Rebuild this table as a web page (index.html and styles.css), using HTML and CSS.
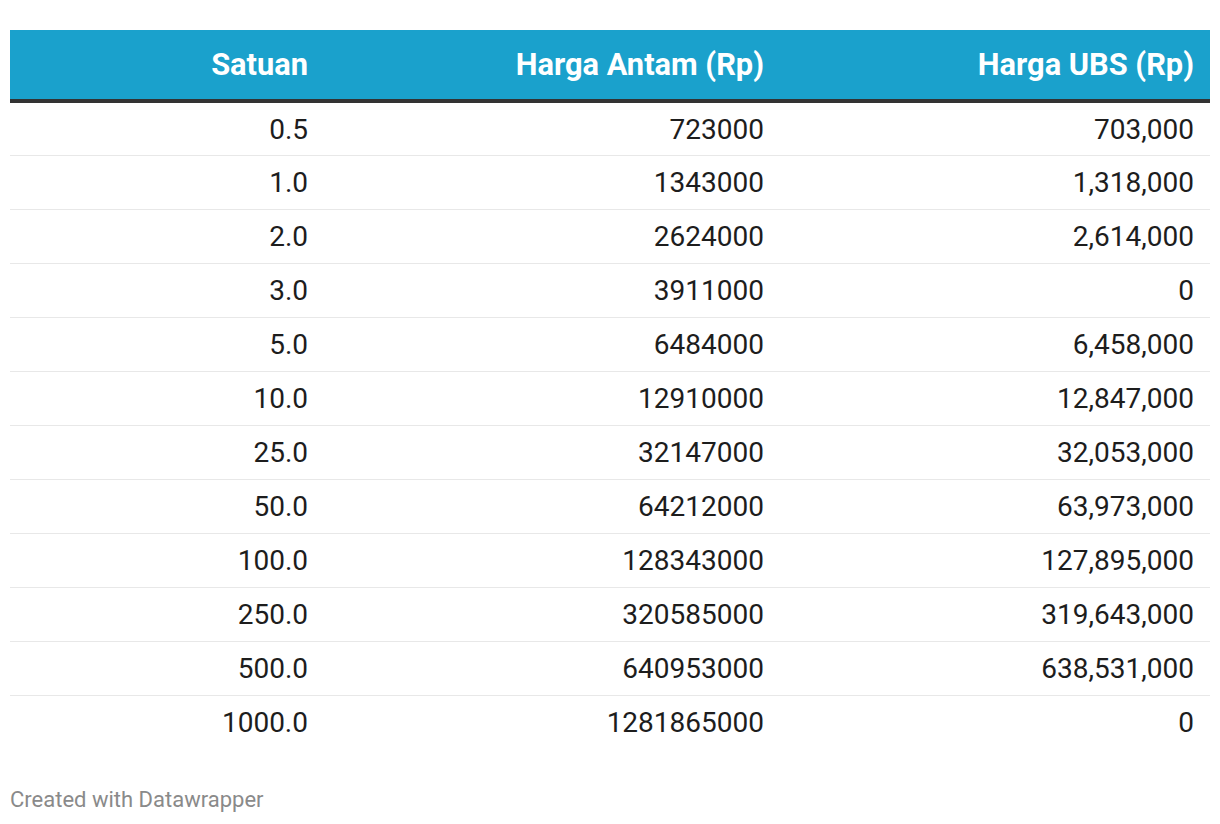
FILE: index.html
```html
<!DOCTYPE html>
<html>
<head>
<meta charset="utf-8">
<link rel="stylesheet" href="styles.css">
</head>
<body>
<div class="chart">
  <table class="tbl">
    <colgroup>
      <col class="c1"><col class="c2"><col class="c3">
    </colgroup>
    <thead>
      <tr><th>Satuan</th><th>Harga Antam (Rp)</th><th>Harga UBS (Rp)</th></tr>
    </thead>
    <tbody>
      <tr><td>0.5</td><td>723000</td><td>703,000</td></tr>
      <tr><td>1.0</td><td>1343000</td><td>1,318,000</td></tr>
      <tr><td>2.0</td><td>2624000</td><td>2,614,000</td></tr>
      <tr><td>3.0</td><td>3911000</td><td>0</td></tr>
      <tr><td>5.0</td><td>6484000</td><td>6,458,000</td></tr>
      <tr><td>10.0</td><td>12910000</td><td>12,847,000</td></tr>
      <tr><td>25.0</td><td>32147000</td><td>32,053,000</td></tr>
      <tr><td>50.0</td><td>64212000</td><td>63,973,000</td></tr>
      <tr><td>100.0</td><td>128343000</td><td>127,895,000</td></tr>
      <tr><td>250.0</td><td>320585000</td><td>319,643,000</td></tr>
      <tr><td>500.0</td><td>640953000</td><td>638,531,000</td></tr>
      <tr><td>1000.0</td><td>1281865000</td><td>0</td></tr>
    </tbody>
  </table>
  <div class="footer">Created with Datawrapper</div>
</div>
</body>
</html>
```
FILE: styles.css
```css
html, body {
  margin: 0;
  padding: 0;
  background: #ffffff;
}
body {
  font-family: Roboto, "Liberation Sans", sans-serif;
}
.chart {
  padding: 30px 10px 0 10px;
}
.tbl {
  width: 1200px;
  border-collapse: collapse;
  table-layout: fixed;
  font-size: 28px;
  color: #1d1d1d;
}
.c1 { width: 314px; }
.c2 { width: 456px; }
.c3 { width: 430px; }
.tbl th {
  background: #1aa1cc;
  color: #ffffff;
  font-weight: 700;
  font-size: 30.8px;
  text-align: right;
  height: 71px;
  padding: 0 16px 0 0;
  box-sizing: border-box;
  border-bottom: 4px solid #333333;
  line-height: 36px;
}
.tbl td {
  text-align: right;
  height: 54px;
  padding: 2px 16px 0 0;
  box-sizing: border-box;
  border-bottom: 1px solid #e8e8e8;
  line-height: 36px;
}
.tbl tbody tr:last-child td {
  border-bottom: none;
}
.footer {
  margin-top: 37px;
  font-size: 22px;
  color: #8a8a8a;
  line-height: 28px;
}
```
